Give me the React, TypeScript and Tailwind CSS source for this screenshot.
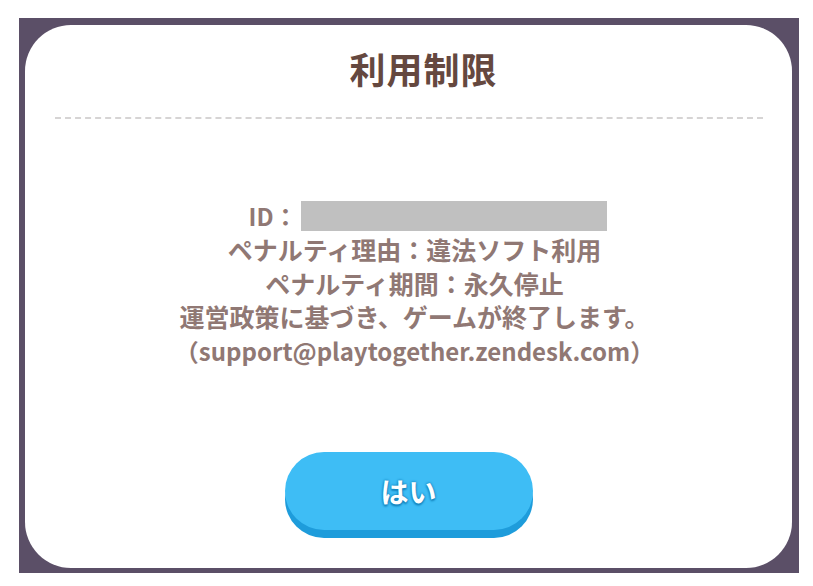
import React from "react";

const jp = { fontFamily: '"Noto Sans CJK JP", "Noto Sans", sans-serif' };

const lines = [
  "ペナルティ理由：違法ソフト利用",
  "ペナルティ期間：永久停止",
  "運営政策に基づき、ゲームが終了します。",
];

export default function App() {
  return (
    <div className="w-[813px] h-[586px] bg-white pt-[18px] pl-[19px]" style={jp}>
      {/* dim backdrop */}
      <div className="w-[780px] h-[555px] bg-[#5b4f67] pt-[7px] pl-[6px]">
        {/* dialog */}
        <div className="w-[767px] h-[543px] bg-white rounded-[46px] flex flex-col items-center">
          <h1 className="mt-[21px] pl-[30px] text-[36px] leading-[44px] font-bold text-[#65483f] tracking-[1px]">
            利用制限
          </h1>
          <div className="mt-[27px] w-[708px] border-t-2 border-dashed border-[#d6d4d4]" />

          <div className="mt-[80px] pl-[12px] flex flex-col items-center text-[25px] leading-[33.75px] font-bold text-[#907874]">
            <div className="flex items-center pl-[26px] text-[24px]">
              <span>ID：</span>
              <span className="ml-[3px] w-[306px] h-[30px] bg-[#c0c0c0]" />
            </div>
            {lines.map((t) => (
              <div key={t} className="whitespace-nowrap">
                {t}
              </div>
            ))}
            <div className="whitespace-nowrap text-[24px]">（support@playtogether.zendesk.com）</div>
          </div>

          <button className="mt-[84px] w-[248px] h-[78px] rounded-full bg-[#3ebdf5] shadow-[0_8px_0_#1e9cdb] flex items-center justify-center text-white text-[28px] font-bold [text-shadow:0_0_3px_#1585bf,0_0_2px_#1585bf,0_2px_2px_#1585bf]">
            はい
          </button>
        </div>
      </div>
    </div>
  );
}
